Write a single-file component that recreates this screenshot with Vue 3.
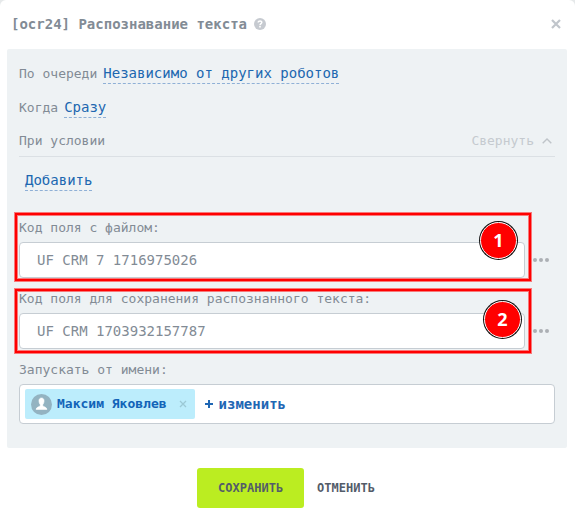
<template>
  <div class="dialog">
    <header class="dialog__header">
      <h1 class="dialog__title">[ocr24] Распознавание текста</h1>
      <button class="icon-btn" type="button" aria-label="Справка">
        <svg width="12" height="12" viewBox="0 0 12 12">
          <circle cx="6" cy="6" r="6" fill="#c6cad0" />
          <path d="M4.2 4.6C4.2 2.3 7.9 2.4 7.8 4.5C7.7 5.7 6.1 5.7 6 7.2" fill="none" stroke="#fff" stroke-width="1.5" />
          <rect x="5.2" y="8" width="1.6" height="1.5" fill="#fff" />
        </svg>
      </button>
      <button class="icon-btn dialog__close" type="button" aria-label="Закрыть">
        <svg width="10" height="10" viewBox="0 0 10 10">
          <path d="M1 1L9 9M9 1L1 9" stroke="#c0c5cb" stroke-width="2.2" />
        </svg>
      </button>
    </header>

    <form id="robot" class="panel" @submit.prevent>
      <div class="row">
        <span>По очереди</span>
        <a class="link" href="#">Независимо от других роботов</a>
      </div>
      <div class="row">
        <span>Когда</span>
        <a class="link" href="#">Сразу</a>
      </div>
      <div class="row row--condition">
        <span>При условии</span>
        <button class="collapse" type="button" @click="opened = !opened">
          Свернуть
          <svg width="10" height="6" viewBox="0 0 10 6">
            <path d="M0.7 5.3L5 1L9.3 5.3" fill="none" stroke="#bfc4c9" stroke-width="1.4" />
          </svg>
        </button>
      </div>
      <div v-if="opened" class="row row--add">
        <a class="link" href="#">Добавить</a>
      </div>

      <div class="fields">
        <div v-for="field in fields" :key="field.id" class="field">
          <label class="field__label" :for="field.id">{{ field.label }}</label>
          <div class="field__control">
            <input :id="field.id" v-model="field.value" class="field__input" type="text">
            <button class="dots" type="button" aria-label="Вставить значение">
              <i></i><i></i><i></i>
            </button>
          </div>
          <div class="mark" :class="'mark--' + field.mark">
            <span class="mark__badge">{{ field.mark }}</span>
          </div>
        </div>

        <div class="field">
          <span id="run-as" class="field__label">Запускать от имени:</span>
          <div class="users" role="group" aria-labelledby="run-as">
            <span class="user">
              <svg width="21" height="21" viewBox="0 0 21 21">
                <circle cx="10.5" cy="10.5" r="10.5" fill="#93b3c1" />
                <path d="M10.5 4C8.7 4 7.8 5.3 8 7.2C8.1 8.8 8.6 9.8 9.2 10.5V12C8.6 12.8 5.2 13 5.1 15.4H15.9C15.8 13 12.4 12.8 11.8 12V10.5C12.4 9.8 12.9 8.8 13 7.2C13.2 5.3 12.3 4 10.5 4Z" fill="#fff" stroke="#fff" stroke-width="0.6" />
              </svg>
              <span class="user__name">Максим Яковлев</span>
              <button class="icon-btn" type="button" aria-label="Удалить">
                <svg width="8" height="8" viewBox="0 0 8 8">
                  <path d="M1 1L7 7M7 1L1 7" stroke="#9cc9d6" stroke-width="1.3" />
                </svg>
              </button>
            </span>
            <button class="change" type="button">
              <svg width="8" height="8" viewBox="0 0 8 8">
                <path d="M4 0V8M0 4H8" stroke="#1f67b4" stroke-width="2" />
              </svg>
              изменить
            </button>
          </div>
        </div>
      </div>
    </form>

    <footer class="dialog__footer">
      <button class="btn btn--save" type="submit" form="robot">СОХРАНИТЬ</button>
      <button class="btn" type="button">ОТМЕНИТЬ</button>
    </footer>
  </div>
</template>

<script setup>
import { ref } from "vue";

const opened = ref(true)
const fields = ref([
  { id: 'file-field', label: 'Код поля с файлом:', value: 'UF CRM 7 1716975026', mark: 1 },
  { id: 'text-field', label: 'Код поля для сохранения распознанного текста:', value: 'UF CRM 1703932157787', mark: 2 },
])
</script>

<style>
body {
  background: #e6e9ea;
}
</style>

<style scoped>
.dialog {
  box-sizing: border-box;
  min-height: 100vh;
  padding: 0 8px 0 7px;
  background: #fff;
  border-radius: 6px 6px 0 0;
  color: #828b95;
  font-family: "DejaVu Sans Mono", monospace;
  font-size: 13px;
  line-height: 16px;
}
button {
  padding: 0;
  border: none;
  background: none;
  font: inherit;
  color: inherit;
  cursor: pointer;
}
svg {
  display: block;
  flex: none;
}
.dialog__header {
  display: flex;
  align-items: center;
  gap: 7px;
  box-sizing: border-box;
  height: 49px;
  padding: 0 6px 1px 4px;
}
.dialog__title {
  margin: 0;
  font-size: 14px;
  font-weight: bold;
}
.dialog__close {
  margin-left: auto;
}
.panel {
  padding: 7px 12px 24px;
  background: #eef2f4;
  border-radius: 2px;
}
.row {
  display: flex;
  align-items: baseline;
  gap: 6px;
  box-sizing: border-box;
  height: 34px;
  padding-top: 9px;
}
.row--condition {
  justify-content: space-between;
  height: 33px;
  border-bottom: 1px solid #dbe0e4;
}
.row--add {
  height: 48px;
  padding: 15px 6px 0;
}
.link {
  border-bottom: 1px dashed #8fb0d6;
  padding-bottom: 2px;
  color: #2067b0;
  font-size: 14px;
  text-decoration: none;
}
.collapse {
  display: flex;
  align-items: center;
  gap: 8px;
  padding-right: 3px;
  color: #c5cacf;
}
.fields {
  display: flex;
  flex-direction: column;
  gap: 13px;
  padding-top: 15px;
}
.field {
  position: relative;
  display: flex;
  flex-direction: column;
  gap: 6px;
}
.field__control {
  display: flex;
  align-items: center;
}
.field__input {
  box-sizing: border-box;
  flex: 1;
  min-width: 0;
  height: 36px;
  padding: 0 17px;
  border: 1px solid #c6cdd3;
  border-radius: 4px;
  background: #fff;
  color: #828b95;
  font: 14px "DejaVu Sans Mono", monospace;
  outline: none;
}
.dots {
  display: flex;
  justify-content: flex-end;
  gap: 2px;
  width: 30px;
  padding-right: 6px;
}
.dots i {
  width: 4px;
  height: 4px;
  border-radius: 50%;
  background: #acb0b4;
}
/* numbered callouts over the fields */
.mark {
  position: absolute;
  top: -7px;
  right: 24px;
  bottom: -3px;
  left: -4px;
  border: 2px solid #f00;
  box-shadow: 0 0 0 1px rgba(255, 0, 0, .5), inset 0 0 0 1px rgba(255, 0, 0, .5);
  pointer-events: none;
}
.mark--2 {
  top: -2px;
  bottom: -4px;
}
.mark__badge {
  position: absolute;
  top: 7px;
  right: 12px;
  width: 35px;
  height: 35px;
  border: 1px solid #fff;
  border-radius: 50%;
  box-shadow: 0 0 0 1px #111;
  background: #f00;
  color: #fff;
  font: bold 18px/35px "Open Sans", sans-serif;
  text-align: center;
}
.mark--2 .mark__badge {
  top: 10px;
  right: 8px;
}
.users {
  display: flex;
  align-items: center;
  gap: 10px;
  box-sizing: border-box;
  height: 40px;
  padding: 0 5px;
  border: 1px solid #c6cdd3;
  border-radius: 4px;
  background: #fff;
}
.user {
  display: flex;
  align-items: center;
  box-sizing: border-box;
  height: 30px;
  padding: 0 8px 0 6px;
  border-radius: 2px;
  background: #bcedfc;
}
.user__name {
  margin: 0 12px 0 5px;
  color: #1264b8;
  font-weight: bold;
}
.change {
  display: flex;
  align-items: center;
  gap: 6px;
  color: #1f67b4;
  font-size: 14px;
  font-weight: bold;
}
.dialog__footer {
  display: flex;
  justify-content: center;
  gap: 13px;
  padding: 20px 2px 13px 0;
}
.btn {
  height: 40px;
  color: #535c69;
  font-size: 12px;
  font-weight: bold;
}
.btn--save {
  padding: 0 21px;
  border-radius: 3px;
  background: #bbed21;
}
</style>
